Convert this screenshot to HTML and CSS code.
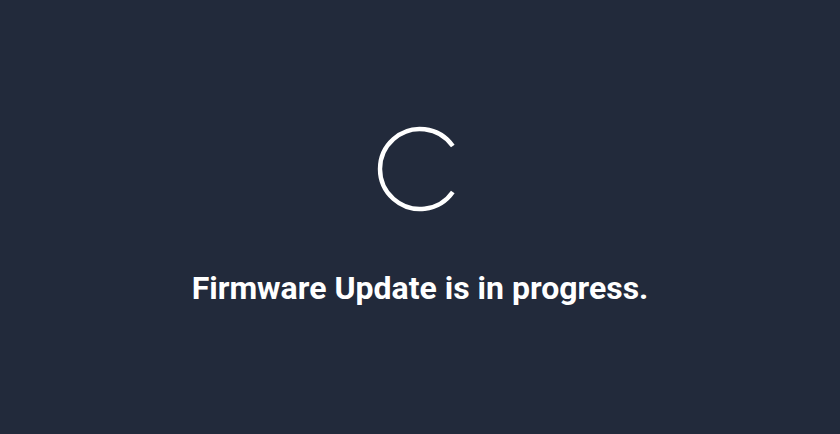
FILE: index.html
```html
<!DOCTYPE html>
<html>
<head>
<meta charset="utf-8">
<link rel="stylesheet" href="styles.css">
</head>
<body>
<main class="screen">
  <svg class="spinner" width="90" height="90" viewBox="0 0 90 90">
    <path d="M 77.8 22.1 A 40 40 0 1 0 77.8 67.9" fill="none" stroke="#ffffff" stroke-width="4.4" stroke-linecap="butt"/>
  </svg>
  <p class="message">Firmware Update is in progress.</p>
</main>
</body>
</html>
```
FILE: styles.css
```css
html, body {
  margin: 0;
  padding: 0;
  background: #222a3b;
}
.screen {
  width: 840px;
  height: 434px;
  display: flex;
  flex-direction: column;
  align-items: center;
  padding-top: 124px;
  box-sizing: border-box;
}
.spinner {
  display: block;
}
.message {
  margin: 56px 0 0 0;
  color: #ffffff;
  font-family: "Roboto", sans-serif;
  font-weight: 700;
  font-size: 32px;
  line-height: 36px;
}
```
